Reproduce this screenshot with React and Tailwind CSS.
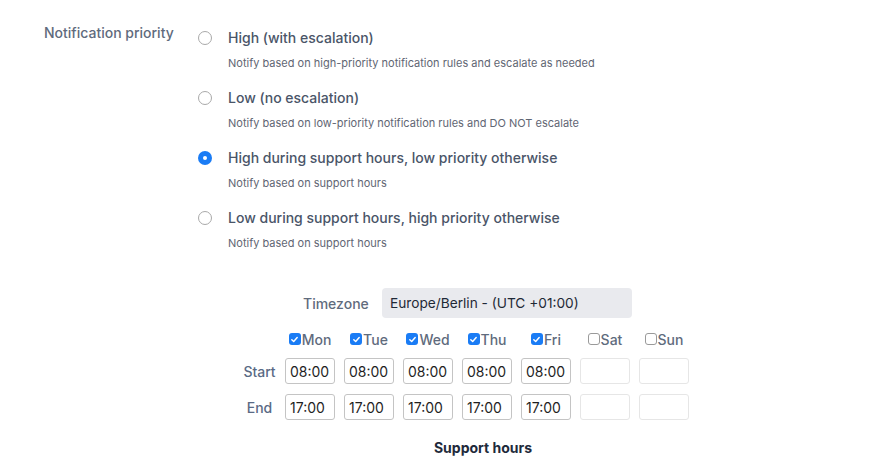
import React from 'react';

const options = [
    { label: 'High (with escalation)', desc: 'Notify based on high-priority notification rules and escalate as needed' },
    { label: 'Low (no escalation)', desc: 'Notify based on low-priority notification rules and DO NOT escalate' },
    { label: 'High during support hours, low priority otherwise', desc: 'Notify based on support hours', checked: true },
    { label: 'Low during support hours, high priority otherwise', desc: 'Notify based on support hours' },
];

const days = [
    { name: 'Mon', on: true },
    { name: 'Tue', on: true },
    { name: 'Wed', on: true },
    { name: 'Thu', on: true },
    { name: 'Fri', on: true },
    { name: 'Sat', on: false },
    { name: 'Sun', on: false },
];

function Radio({ checked }) {
    if (checked) {
        return (
            <span className="w-[14px] h-[14px] rounded-full bg-[#1a7cf5] flex items-center justify-center flex-shrink-0">
                <span className="w-[4px] h-[4px] rounded-full bg-white" />
            </span>
        );
    }
    return <span className="w-[14px] h-[14px] rounded-full border border-[#a9a9a9] bg-white flex-shrink-0" />;
}

function Checkbox({ on }) {
    if (on) {
        return (
            <span className="w-[12px] h-[12px] rounded-[3px] bg-[#1a7cf5] flex items-center justify-center flex-shrink-0">
                <svg width="9" height="9" viewBox="0 0 10 10" fill="none">
                    <path d="M2 5.2 L4.1 7.3 L8 2.8" stroke="white" strokeWidth="1.6" strokeLinecap="round" strokeLinejoin="round" />
                </svg>
            </span>
        );
    }
    return <span className="w-[12px] h-[12px] rounded-[3px] border border-[#9a9a9a] bg-white flex-shrink-0" />;
}

function TimeBox({ value }) {
    return (
        <div
            className={`w-[50px] h-[26px] rounded-[3px] border flex items-center px-[4px] text-[14px] text-[#1f1f1f] ${
                value ? 'border-[#c4c4c4]' : 'border-[#e6e6e6]'
            }`}
        >
            {value}
        </div>
    );
}

export default function App() {
    return (
        <div className="w-[881px] h-[472px] bg-white overflow-hidden font-['Inter',sans-serif]">
            {/* Priority */}
            <div className="flex pl-[44px] pt-[23px]">
                <div className="w-[154px] text-[14px] leading-5 font-medium text-[#5f6b7d]">Notification priority</div>
                <div className="pt-[4px] flex flex-col">
                    {options.map((o) => (
                        <div key={o.label} className="h-[60px]">
                            <div className="flex items-center h-5">
                                <span className="pt-[1px] flex">
                                    <Radio checked={o.checked} />
                                </span>
                                <span className="ml-[16px] text-[14px] font-medium text-[#4a5568]">{o.label}</span>
                            </div>
                            <div className="mt-[8px] ml-[30px] text-[11px] leading-4 text-[#5f6673]">{o.desc}</div>
                        </div>
                    ))}
                </div>
            </div>

            {/* Support hours */}
            <div className="pl-[242px] mt-[21px]">
                <div className="flex items-center pl-[61px] h-[30px]">
                    <span className="w-[79px] text-[14px] font-medium text-[#5f6b7d]">Timezone</span>
                    <div className="w-[250px] h-[30px] rounded-[4px] bg-[#e9eaee] flex items-center px-[8px] text-[13.7px] text-[#1f2937]">
                        Europe/Berlin - (UTC +01:00)
                    </div>
                </div>

                <div className="flex items-center h-[20px] mt-[11px]">
                    <div className="w-[43px]" />
                    <div className="flex gap-[9px]">
                        {days.map((d) => (
                            <div key={d.name} className="w-[50px] flex items-center justify-center gap-[1px]">
                                <Checkbox on={d.on} />
                                <span className="text-[14px] font-medium text-[#5f6b7d]">{d.name}</span>
                            </div>
                        ))}
                    </div>
                </div>

                <div className="flex items-center mt-[9px]">
                    <div className="w-[35px] text-center text-[14px] font-medium text-[#5a6a85]">Start</div>
                    <div className="flex gap-[9px] ml-[8px]">
                        {days.map((d) => (
                            <TimeBox key={d.name} value={d.on ? '08:00' : ''} />
                        ))}
                    </div>
                </div>

                <div className="flex items-center mt-[10px]">
                    <div className="w-[35px] text-center text-[14px] font-medium text-[#5a6a85]">End</div>
                    <div className="flex gap-[9px] ml-[8px]">
                        {days.map((d) => (
                            <TimeBox key={d.name} value={d.on ? '17:00' : ''} />
                        ))}
                    </div>
                </div>

                <div className="ml-[43px] w-[396px] text-center mt-[18px] text-[14px] leading-5 font-bold text-[#1e2a3b]">
                    Support hours
                </div>
            </div>
        </div>
    );
}
